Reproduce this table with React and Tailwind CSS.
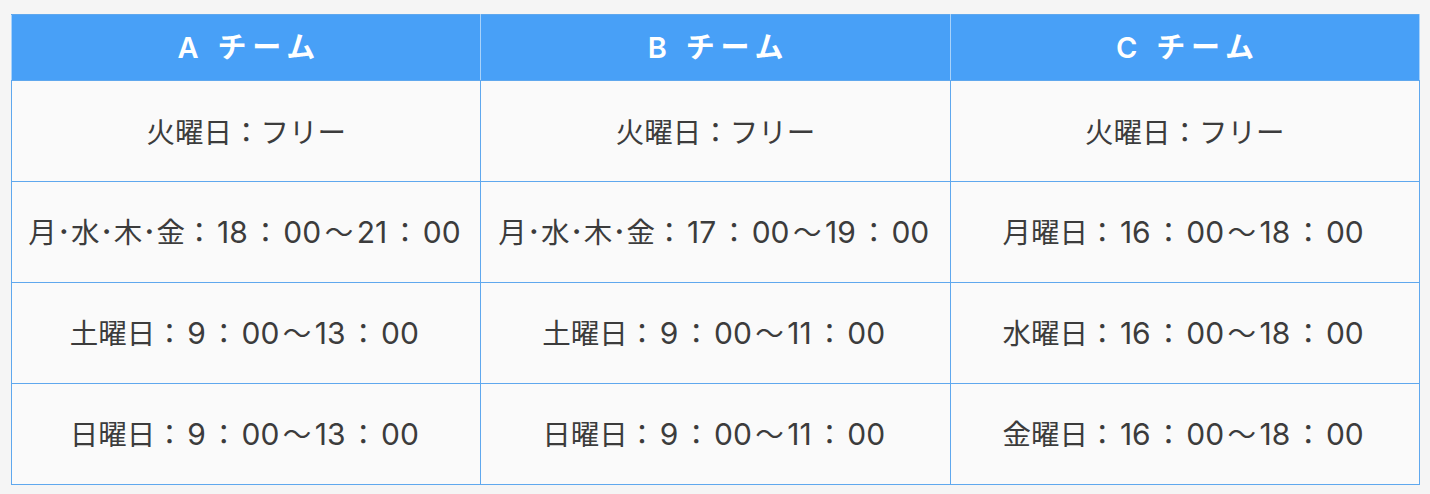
const teams = ["A チーム", "B チーム", "C チーム"];

const rows = [
  ["火曜日：フリー", "火曜日：フリー", "火曜日：フリー"],
  ["月･水･木･金：18：00～21：00", "月･水･木･金：17：00～19：00", "月曜日：16：00～18：00"],
  ["土曜日：9：00～13：00", "土曜日：9：00～11：00", "水曜日：16：00～18：00"],
  ["日曜日：9：00～13：00", "日曜日：9：00～11：00", "金曜日：16：00～18：00"],
];

// digits get a little space against the kana/kanji, like text-autospace
const Cell = ({ text }) =>
  text.split(/(\d+)/).map((part, i) =>
    /\d/.test(part) ? (
      <span key={i} className="mx-[3.5px] text-[30px]" style={{ fontFamily: "Inter, sans-serif" }}>
        {part}
      </span>
    ) : (
      <span key={i}>{part}</span>
    )
  );

export default function App() {
  return (
    <div
      className="min-h-screen bg-[#f5f5f5] pt-[14px] pl-[11px] pr-[10px]"
      style={{ fontFamily: '"Noto Sans CJK JP", sans-serif' }}
    >
      <table className="w-[1409px] table-fixed border-collapse border border-[#5fa8ee]">
        <thead>
          <tr className="bg-[#48a0f7]">
            {teams.map((t) => (
              <th
                key={t}
                className="h-[66px] border border-[#a8d2fa] border-t-[#5fa8ee] border-b-[#5fa8ee] pl-[6px] text-center text-[29px] font-semibold tracking-[0.2em] text-white"
                style={{ fontFamily: 'Inter, "Noto Sans CJK JP", sans-serif' }}
              >
                {t}
              </th>
            ))}
          </tr>
        </thead>
        <tbody>
          {rows.map((r, i) => (
            <tr key={i} className="bg-[#fafafa]">
              {r.map((c, j) => (
                <td
                  key={j}
                  className="h-[101px] border border-[#5fa8ee] text-center text-[28.5px] leading-none whitespace-nowrap text-[#3c3c3c]"
                >
                  <Cell text={c} />
                </td>
              ))}
            </tr>
          ))}
        </tbody>
      </table>
    </div>
  );
}
